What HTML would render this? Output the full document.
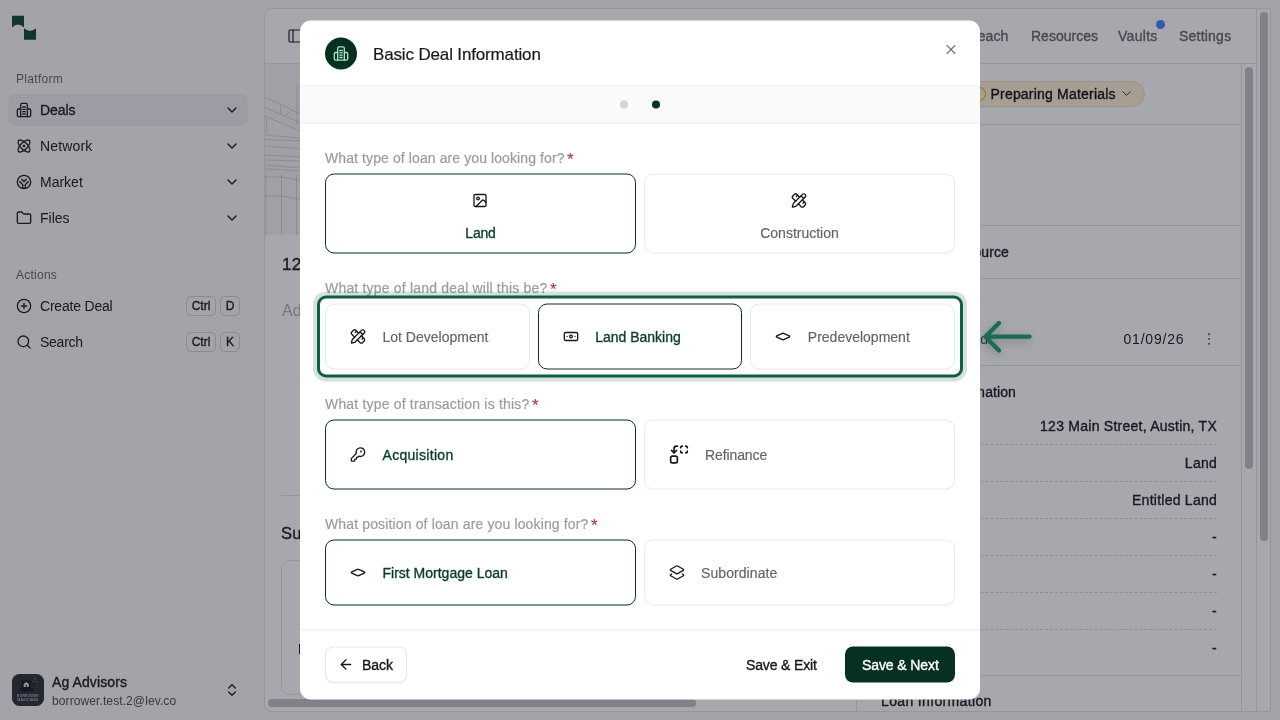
<!DOCTYPE html>
<html lang="en">
<head>
<meta charset="utf-8">
<title>Basic Deal Information</title>
<style>
*{box-sizing:border-box;margin:0;padding:0}
html,body{width:1280px;height:720px;overflow:hidden}
body{font-family:"Liberation Sans",sans-serif;font-size:14px;color:#18181b;background:#fafafa;position:relative}
.abs{position:absolute}
.t{position:absolute;white-space:nowrap;line-height:20px}
.m{-webkit-text-stroke:0.35px currentColor}
svg{display:block}
.ic{position:absolute;fill:none;stroke:currentColor;stroke-width:2;stroke-linecap:round;stroke-linejoin:round}

/* ---------- app behind ---------- */
#app{opacity:.9999;position:absolute;left:0;top:0;width:1280px;height:720px;background:#f9f8f7;color:#26262c}
#panel{position:absolute;left:264px;top:8px;width:1007px;height:704px;background:#fff;border:1px solid #e4e4e7;border-radius:8px 0 0 8px;overflow:hidden}
.hl{position:absolute;background:#e4e4e7}
.kbd{position:absolute;height:20px;border:1px solid #d4d4d8;border-radius:5px;font-size:12px;line-height:18px;text-align:center;color:#26262c}
.dash{position:absolute;height:0;border-top:1px dashed #d8d8dc}

#overlay{position:absolute;left:0;top:0;width:1280px;height:720px;background:rgba(4,6,20,.35)}

/* ---------- modal ---------- */
#modal{opacity:.9999;position:absolute;left:50%;top:50%;transform:translate(-50%,-50%);width:680px;height:679px;background:#fff;border-radius:11px;overflow:hidden;color:#18181b}
.card{position:absolute;border:1px solid #e8e8e8;border-radius:9px;background:#fff}
.card.sel{border-color:#0b2a24}
.lbl{color:#9c9c9c;-webkit-text-stroke:.2px #9c9c9c}
.req{color:#a51d1d}
.sel .t, .g{color:#0c3d2b}
.u{color:#636363;-webkit-text-stroke:.15px #636363}
</style>
</head>
<body>

<div id="app">
  <!-- sidebar -->
  <svg class="abs" style="left:12px;top:15px" width="24" height="25" viewBox="0 0 24 25"><path d="M0 .8H12V12.6Q6 6.6 0 12.6Z" fill="#1c4f3a"/><path d="M12 13.2Q18 18.6 24 13.2V24.8H12Z" fill="#1c4f3a"/></svg>
  <div class="t" style="left:16px;top:69px;font-size:12px;color:#6b6b74;letter-spacing:.3px">Platform</div>
  <div class="abs" style="left:8px;top:94px;width:240px;height:32px;border-radius:8px;background:#efeff2"></div>

  <svg class="ic" style="left:16px;top:102px" width="16" height="16" viewBox="0 0 24 24"><path d="M7 22V4a2 2 0 0 1 2-2h6a2 2 0 0 1 2 2v18Z"/><path d="M7 10.5H4a2 2 0 0 0-2 2V20a2 2 0 0 0 2 2h3"/><path d="M17 10.5h3a2 2 0 0 1 2 2V20a2 2 0 0 1-2 2h-3"/><path d="M10.2 7.5h3.6"/><path d="M10.2 11h3.6"/><path d="M10.2 14.5h3.6"/><path d="M10.2 18h3.6"/></svg>
  <div class="t m" style="left:40px;top:100px;letter-spacing:-.1px">Deals</div><svg class="ic" style="left:224px;top:102px" width="16" height="16" viewBox="0 0 24 24"><path d="m6 9 6 6 6-6"/></svg>
  <svg class="ic" style="left:16px;top:138px" width="16" height="16" viewBox="0 0 24 24"><circle cx="12" cy="12" r="1"/><path d="M20.2 20.2c2.04-2.03.02-7.36-4.5-11.9-4.54-4.52-9.87-6.54-11.9-4.5-2.04 2.03-.02 7.36 4.5 11.9 4.54 4.52 9.87 6.54 11.9 4.5Z"/><path d="M15.7 15.7c4.52-4.54 6.54-9.87 4.5-11.9-2.03-2.04-7.36-.02-11.9 4.5-4.52 4.54-6.54 9.87-4.5 11.9 2.03 2.04 7.36.02 11.9-4.5Z"/></svg>
  <div class="t" style="left:40px;top:136px;letter-spacing:.15px">Network</div><svg class="ic" style="left:224px;top:138px" width="16" height="16" viewBox="0 0 24 24"><path d="m6 9 6 6 6-6"/></svg>
  <svg class="ic" style="left:16px;top:174px" width="16" height="16" viewBox="0 0 24 24"><circle cx="12" cy="12" r="10"/><path d="M10.3 21.6v-5.2L5.6 11.2"/><path d="M13.7 21.6v-5.2l4.7-5.2"/><path d="M8.6 7.8 12 11.6l3.4-3.8"/></svg>
  <div class="t" style="left:40px;top:172px">Market</div><svg class="ic" style="left:224px;top:174px" width="16" height="16" viewBox="0 0 24 24"><path d="m6 9 6 6 6-6"/></svg>
  <svg class="ic" style="left:16px;top:210px" width="16" height="16" viewBox="0 0 24 24"><path d="M20 20a2 2 0 0 0 2-2V8a2 2 0 0 0-2-2h-7.9a2 2 0 0 1-1.69-.9L9.6 3.9A2 2 0 0 0 7.93 3H4a2 2 0 0 0-2 2v13a2 2 0 0 0 2 2Z"/></svg>
  <div class="t" style="left:40px;top:208px">Files</div><svg class="ic" style="left:224px;top:210px" width="16" height="16" viewBox="0 0 24 24"><path d="m6 9 6 6 6-6"/></svg>
  <div class="t" style="left:16px;top:265px;font-size:12px;color:#6b6b74;letter-spacing:.25px">Actions</div>
  <svg class="ic" style="left:16px;top:298px" width="16" height="16" viewBox="0 0 24 24"><circle cx="12" cy="12" r="10"/><path d="M8 12h8"/><path d="M12 8v8"/></svg>
  <div class="t" style="left:40px;top:296px;letter-spacing:-.2px">Create Deal</div>
  <div class="kbd m" style="left:186px;top:296px;width:30px">Ctrl</div><div class="kbd m" style="left:220px;top:296px;width:20px">D</div>
  <svg class="ic" style="left:16px;top:334px" width="16" height="16" viewBox="0 0 24 24"><circle cx="11" cy="11" r="8"/><path d="m21 21-4.3-4.3"/></svg>
  <div class="t" style="left:40px;top:332px;letter-spacing:-.25px">Search</div>
  <div class="kbd m" style="left:186px;top:332px;width:30px">Ctrl</div><div class="kbd m" style="left:220px;top:332px;width:20px">K</div>
  <!-- user -->
  <div class="abs" style="left:12px;top:674px;width:32px;height:32px;border-radius:7.5px;background:#363a42"></div>
  <svg class="abs" style="left:12px;top:674px" width="32" height="32" viewBox="0 0 32 32"><path d="M9.6 6.4h9.4v8.2H9.6z" fill="#20232c"/><ellipse cx="14.4" cy="15.6" rx="7.6" ry="1.9" fill="#20232c"/><path d="M14.3 8l2.6 2.1v3h-5.2v-3z" fill="#e6dccb"/><path d="M13.6 11h1.5v1.6h-1.5z" fill="#363a42"/><path d="M20.4 12.2l3.2-5" stroke="#2a2d36" stroke-width="1"/><path d="M23 4.2v1.4M22.3 4.9h1.4M21.3 7.1v1M20.8 7.6h1M24.4 7.3v1M23.9 7.8h1" stroke="#b9b2a6" stroke-width=".5"/><text x="16" y="23" font-size="3.3" font-weight="700" fill="#b4b4b4" text-anchor="middle" letter-spacing=".25" font-family="Liberation Sans, sans-serif">BORROWER</text><text x="16" y="26.7" font-size="3.3" font-weight="700" fill="#b4b4b4" text-anchor="middle" letter-spacing=".25" font-family="Liberation Sans, sans-serif">MAGICIANS</text></svg>
  <div class="t m" style="left:52px;top:672px;letter-spacing:.1px">Ag Advisors</div>
  <div class="t" style="left:52px;top:692px;font-size:12px;line-height:18px;color:#55555e;letter-spacing:.1px">borrower.test.2@lev.co</div>
  <svg class="ic" style="left:224px;top:682px" width="16" height="16" viewBox="0 0 24 24"><path d="m7 15 5 5 5-5"/><path d="m7 9 5-5 5 5"/></svg>
  <div id="panel"></div>
  <!-- top bar -->
  <svg class="ic" style="left:287px;top:28px;stroke-width:1.8" width="16" height="16" viewBox="0 0 24 24"><rect width="18" height="18" x="3" y="3" rx="2"/><path d="M9 3v18"/></svg>
  <div class="t m" style="left:950px;top:26px;color:#6e6e72;letter-spacing:.1px">Outreach</div>
  <div class="t m" style="left:1031px;top:26px;color:#6e6e72">Resources</div>
  <div class="t m" style="left:1118px;top:26px;color:#6e6e72;letter-spacing:.3px">Vaults</div>
  <div class="abs" style="left:1156px;top:19.5px;width:9px;height:9px;border-radius:50%;background:#4f86f7"></div>
  <div class="t m" style="left:1179px;top:26px;color:#6e6e72;letter-spacing:.22px">Settings</div>
  <div class="hl" style="left:265px;top:63px;width:991px;height:1px"></div>
  <div class="hl" style="left:1256px;top:9px;width:1px;height:702px"></div>
  <!-- outer scrollbar -->
  <div class="abs" style="left:1260px;top:12px;width:8px;height:529px;border-radius:4px;background:#c3c3c8"></div>
  <!-- hero sketch -->
  <div class="abs" style="left:265px;top:64px;width:592px;height:171px;background:#f4f4f6;overflow:hidden">
   <svg width="60" height="171" viewBox="0 0 60 171" style="position:absolute;left:0;top:0" fill="none" stroke="#5f5f6a" stroke-opacity=".3" stroke-width=".7"><path d="M32.0 21.0L32.0 61.0M0.0 33.0L35.0 49.7M0.0 43.5L35.0 58.5M0.0 52.0L35.0 67.0M15.7 41.0L15.7 50.0M19.5 52.0L28.0 46.0M1.5 54.7L1.5 68.5M0.0 71.0L35.0 74.0M0.0 75.5L35.0 77.0M0.0 82.0L35.0 84.7M0.0 91.0L35.0 93.0M0.0 96.0L35.0 97.0M0.0 101.0L35.0 104.0M0.0 104.7L35.0 107.0M16.5 109.7L16.5 171.0M31.5 111.0L31.5 171.0M1.0 111.0L1.0 171.0M0.0 113.0L16.5 113.0M16.5 113.0L31.5 115.5M0.0 132.0L16.5 132.0M16.5 132.0L31.5 134.7M31.5 115.5L35.0 116.0M31.5 134.7L35.0 135.5"/></svg>
  </div>
  <div class="t m" style="left:282px;top:251.5px;font-size:17px;line-height:26px;letter-spacing:.3px">123 Main Street</div>
  <div class="t" style="left:282px;top:299px;font-size:16px;line-height:24px;color:#b2b2b8">Add a description</div>
  <div class="hl" style="left:281px;top:495px;width:560px;height:1px"></div>
  <div class="t m" style="left:281px;top:519.6px;font-size:16.5px;line-height:26px;letter-spacing:.2px">Summary</div>
  <div class="abs" style="left:281px;top:560px;width:560px;height:135px;border:1px solid #e4e4e7;border-radius:9px"></div>
  <div class="abs" style="left:299px;top:644px;width:1.5px;height:10px;background:#26262c"></div>
  <!-- horizontal scrollbar -->
  <div class="abs" style="left:268px;top:699px;width:428px;height:8px;border-radius:4px;background:#c3c3c8"></div>
  <!-- right column -->
  <div class="hl" style="left:856px;top:64px;width:1px;height:647px"></div>
  <div class="hl" style="left:1241px;top:64px;width:1px;height:647px"></div>
  <div class="abs" style="left:1245px;top:67px;width:8px;height:402px;border-radius:4px;background:#c3c3c8"></div>
  <div class="abs" style="left:962px;top:81px;width:183px;height:26px;border-radius:13px;background:#fff0d8;border:1px solid #e9dcc6"></div>
  <div class="abs" style="left:972px;top:87px;width:14px;height:14px;border-radius:50%;border:1.5px solid #e6a23c"></div>
  <div class="t m" style="left:990.5px;top:84px;letter-spacing:.2px;color:#18181b">Preparing Materials</div>
  <svg class="ic" style="left:1119px;top:86px;stroke-width:1.6;color:#3a3a40" width="15" height="15" viewBox="0 0 24 24"><path d="m6 9 6 6 6-6"/></svg>
  <div class="hl" style="left:857px;top:124px;width:384px;height:1px"></div>
  <div class="hl" style="left:857px;top:225px;width:384px;height:1px"></div>
  <div class="t m" style="right:271px;top:242px;letter-spacing:.1px">Capital Source</div>
  <div class="hl" style="left:857px;top:278px;width:384px;height:1px"></div>
  <div class="t" style="right:292px;top:329px;color:#52525b">Uploaded</div>
  <div class="t" style="left:1123.5px;top:329px;letter-spacing:.8px">01/09/26</div>
  <svg class="abs" style="left:1207px;top:332px" width="4" height="14" viewBox="0 0 4 14" fill="#71717a"><circle cx="2" cy="2.2" r="1.1"/><circle cx="2" cy="7" r="1.1"/><circle cx="2" cy="11.8" r="1.1"/></svg>
  <div class="hl" style="left:857px;top:365px;width:384px;height:1px"></div>
  <div class="t m" style="right:264px;top:382px;letter-spacing:.1px">Property Information</div>
  <div class="t m" style="right:63px;top:416px;letter-spacing:.25px">123 Main Street, Austin, TX</div><div class="t m" style="right:63px;top:453px;letter-spacing:.25px">Land</div><div class="t m" style="right:63px;top:490px;letter-spacing:.25px">Entitled Land</div><div class="t m" style="right:63px;top:527px;letter-spacing:.25px">-</div><div class="t m" style="right:63px;top:564px;letter-spacing:.25px">-</div><div class="t m" style="right:63px;top:601px;letter-spacing:.25px">-</div><div class="t m" style="right:63px;top:638px;letter-spacing:.25px">-</div>
  <div class="dash" style="left:881px;top:444px;width:336px"></div><div class="dash" style="left:881px;top:481px;width:336px"></div><div class="dash" style="left:881px;top:518px;width:336px"></div><div class="dash" style="left:881px;top:555px;width:336px"></div><div class="dash" style="left:881px;top:592px;width:336px"></div><div class="dash" style="left:881px;top:629px;width:336px"></div>
  <div class="hl" style="left:857px;top:675px;width:384px;height:1px"></div>
  <div class="t m" style="left:881px;top:691px;letter-spacing:.35px">Loan Information</div>

</div>

<div id="overlay"></div>

<div id="modal">
 <div id="mi" style="position:absolute;left:-300px;top:-20px;width:1280px;height:720px">
  <!-- header -->
  <div class="abs" style="left:325px;top:37px;width:32px;height:32px;border-radius:50%;background:#06301f"></div>
  <svg class="ic" style="left:333px;top:45px;color:#a7e3c4" width="16" height="16" viewBox="0 0 24 24"><path d="M7 22V4a2 2 0 0 1 2-2h6a2 2 0 0 1 2 2v18Z"/><path d="M7 10.5H4a2 2 0 0 0-2 2V20a2 2 0 0 0 2 2h3"/><path d="M17 10.5h3a2 2 0 0 1 2 2V20a2 2 0 0 1-2 2h-3"/><path d="M10.2 7.5h3.6"/><path d="M10.2 11h3.6"/><path d="M10.2 14.5h3.6"/><path d="M10.2 18h3.6"/></svg>
  <div class="t" style="left:373px;top:41px;font-size:17px;line-height:26px;letter-spacing:-.15px;color:#1a1a1c;-webkit-text-stroke:.2px #1a1a1c">Basic Deal Information</div>
  <svg class="ic" style="left:943px;top:41px;color:#6f6f76;stroke-width:1.6" width="16" height="16" viewBox="0 0 24 24"><path d="M18 6 6 18"/><path d="m6 6 12 12"/></svg>
  <!-- stepper -->
  <div class="abs" style="left:300px;top:85px;width:680px;height:38px;background:#fafafa;border-top:1px solid #eeeeee;border-bottom:1px solid #eeeeee"></div>
  <div class="abs" style="left:620px;top:100px;width:8px;height:8px;border-radius:50%;background:#d4d4d4"></div>
  <div class="abs" style="left:652px;top:100px;width:8px;height:8px;border-radius:50%;background:#06301f"></div>

  <!-- Q1 -->
  <div class="t lbl" style="left:325px;top:147px;letter-spacing:0.1px">What type of loan are you looking for?<span class="req" style="margin-left:2.5px;font-size:17px;line-height:14px;position:relative;top:1.5px">*</span></div>
  <div class="card sel" style="left:325px;top:173px;width:311px;height:80px">
    <svg class="ic" style="left:146px;top:18px;color:#18181b" width="16" height="16" viewBox="0 0 24 24"><rect width="18" height="18" x="3" y="3" rx="2" ry="2"/><circle cx="9" cy="9" r="2"/><path d="m21 15-3.086-3.086a2 2 0 0 0-2.828 0L6 21"/></svg>
    <div class="t m" style="left:0;width:309px;text-align:center;top:48px;letter-spacing:-.2px">Land</div>
  </div>
  <div class="card" style="left:644px;top:173px;width:311px;height:80px">
    <svg class="ic" style="left:146px;top:18px;color:#18181b" width="16" height="16" viewBox="0 0 24 24"><path d="M13 7 8.7 2.7a2.41 2.41 0 0 0-3.4 0L2.7 5.3a2.41 2.41 0 0 0 0 3.4L7 13"/><path d="m8 6 2-2"/><path d="m18 16 2-2"/><path d="m17 11 4.3 4.3c.94.94.94 2.46 0 3.4l-2.6 2.6c-.94.94-2.46.94-3.4 0L11 17"/><path d="M21.174 6.812a1 1 0 0 0-3.986-3.987L3.842 16.174a2 2 0 0 0-.5.83l-1.321 4.352a.5.5 0 0 0 .623.622l4.353-1.32a2 2 0 0 0 .83-.497z"/><path d="m15 5 4 4"/></svg>
    <div class="t u" style="left:0;width:309px;text-align:center;top:48px">Construction</div>
  </div>

  <!-- Q2 (highlighted) -->
  <div class="t lbl" style="left:325px;top:277px;letter-spacing:0.19px">What type of land deal will this be?<span class="req" style="margin-left:2.5px;font-size:17px;line-height:14px;position:relative;top:1.5px">*</span></div>
  <div class="abs" style="left:317px;top:295px;width:646px;height:82px;border:3px solid #125c43;border-radius:9px;box-shadow:0 0 0 4px rgba(18,92,67,.18);background:#fff"></div>
  <div class="card" style="left:325px;top:303px;width:204.67px;height:66px">
    <svg class="ic" style="left:24px;top:24px;color:#18181b" width="16" height="16" viewBox="0 0 24 24"><path d="M13 7 8.7 2.7a2.41 2.41 0 0 0-3.4 0L2.7 5.3a2.41 2.41 0 0 0 0 3.4L7 13"/><path d="m8 6 2-2"/><path d="m18 16 2-2"/><path d="m17 11 4.3 4.3c.94.94.94 2.46 0 3.4l-2.6 2.6c-.94.94-2.46.94-3.4 0L11 17"/><path d="M21.174 6.812a1 1 0 0 0-3.986-3.987L3.842 16.174a2 2 0 0 0-.5.83l-1.321 4.352a.5.5 0 0 0 .623.622l4.353-1.32a2 2 0 0 0 .83-.497z"/><path d="m15 5 4 4"/></svg>
    <div class="t u" style="left:56.5px;top:22px">Lot Development</div>
  </div>
  <div class="card sel" style="left:537.67px;top:303px;width:204.67px;height:66px">
    <svg class="ic" style="left:24px;top:24px;color:#18181b" width="16" height="16" viewBox="0 0 24 24"><rect width="20" height="12" x="2" y="6" rx="2"/><circle cx="12" cy="12" r="2"/><path d="M6 12h.01M18 12h.01"/></svg>
    <div class="t m" style="left:56.5px;top:22px">Land Banking</div>
  </div>
  <div class="card" style="left:750.33px;top:303px;width:204.67px;height:66px">
    <svg class="ic" style="left:24px;top:24px;color:#18181b" width="16" height="16" viewBox="0 0 24 24"><path d="M12.83 7.18a2 2 0 0 0-1.66 0L2.6 11.08a1 1 0 0 0 0 1.83l8.58 3.91a2 2 0 0 0 1.66 0l8.58-3.9a1 1 0 0 0 0-1.83z"/></svg>
    <div class="t u" style="left:56.5px;top:22px">Predevelopment</div>
  </div>

  <!-- Q3 -->
  <div class="t lbl" style="left:325px;top:393px;letter-spacing:0.18px">What type of transaction is this?<span class="req" style="margin-left:2.5px;font-size:17px;line-height:14px;position:relative;top:1.5px">*</span></div>
  <div class="card sel" style="left:325px;top:419px;width:311px;height:70px">
    <svg class="ic" style="left:24px;top:26px;color:#18181b" width="16" height="16" viewBox="0 0 24 24"><path d="M2.586 17.414A2 2 0 0 0 2 18.828V21a1 1 0 0 0 1 1h3a1 1 0 0 0 1-1v-1a1 1 0 0 1 1-1h1a1 1 0 0 0 1-1v-1a1 1 0 0 1 1-1h.172a2 2 0 0 0 1.414-.586l.814-.814a6.5 6.5 0 1 0-4-4z"/><circle cx="16.5" cy="7.5" r=".5" fill="currentColor"/></svg>
    <div class="t m" style="left:56.5px;top:24px;letter-spacing:.3px">Acquisition</div>
  </div>
  <div class="card" style="left:644px;top:419px;width:311px;height:70px">
    <svg class="ic" style="left:24.2px;top:23.6px;color:#18181b" width="20" height="20" viewBox="0 0 24 24"><path d="M14 4a2 2 0 0 1 2-2"/><path d="M16 10a2 2 0 0 1-2-2"/><path d="M20 2a2 2 0 0 1 2 2"/><path d="M22 8a2 2 0 0 1-2 2"/><path d="m3 7 3 3 3-3"/><path d="M6 10V5a3 3 0 0 1 3-3h1"/><rect x="2" y="14" width="8" height="8" rx="2"/></svg>
    <div class="t u" style="left:60px;top:24px;letter-spacing:-.1px">Refinance</div>
  </div>

  <!-- Q4 -->
  <div class="t lbl" style="left:325px;top:513px;letter-spacing:0.14px">What position of loan are you looking for?<span class="req" style="margin-left:2.5px;font-size:17px;line-height:14px;position:relative;top:1.5px">*</span></div>
  <div class="card sel" style="left:325px;top:539px;width:311px;height:66px">
    <svg class="ic" style="left:24px;top:24px;color:#18181b" width="16" height="16" viewBox="0 0 24 24"><path d="M12.83 7.18a2 2 0 0 0-1.66 0L2.6 11.08a1 1 0 0 0 0 1.83l8.58 3.91a2 2 0 0 0 1.66 0l8.58-3.9a1 1 0 0 0 0-1.83z"/></svg>
    <div class="t m" style="left:56.5px;top:22px">First Mortgage Loan</div>
  </div>
  <div class="card" style="left:644px;top:539px;width:311px;height:66px">
    <svg class="ic" style="left:24.3px;top:24px;color:#18181b" width="16" height="16" viewBox="0 0 24 24"><path d="M13 13.74a2 2 0 0 1-2 0L2.5 8.87a1 1 0 0 1 0-1.74L11 2.26a2 2 0 0 1 2 0l8.5 4.87a1 1 0 0 1 0 1.74z"/><path d="m20 14.285 1.5.845a1 1 0 0 1 0 1.74L13 21.74a2 2 0 0 1-2 0l-8.5-4.87a1 1 0 0 1 0-1.74l1.5-.845"/></svg>
    <div class="t u" style="left:56px;top:22px;letter-spacing:.08px">Subordinate</div>
  </div>

  <!-- footer -->
  <div class="abs" style="left:300px;top:629px;width:680px;height:1px;background:#eeeeee"></div>
  <div class="abs" style="left:325px;top:646px;width:81.5px;height:36px;border:1px solid #e6e6e6;border-radius:8px;box-shadow:0 1px 2px rgba(0,0,0,.06)"></div>
  <svg class="ic" style="left:338px;top:656px;color:#18181b" width="16" height="16" viewBox="0 0 24 24"><path d="m12 19-7-7 7-7"/><path d="M19 12H5"/></svg>
  <div class="t m" style="left:362px;top:653.5px">Back</div>
  <div class="t m" style="left:746px;top:653.5px;letter-spacing:-.15px">Save &amp; Exit</div>
  <div class="abs" style="left:845.4px;top:646px;width:109.8px;height:36px;border-radius:8px;background:#06301f"></div>
  <div class="t m" style="left:862px;top:653.5px;color:#fff;letter-spacing:-.1px">Save &amp; Next</div>
 </div>
</div>
<svg class="abs" style="left:970px;top:306px;overflow:visible;filter:drop-shadow(0 3px 4px rgba(0,0,0,.25))" width="80" height="62" viewBox="970 306 80 62" fill="none" stroke="#1a6b4f" stroke-width="4.2" stroke-linecap="round" stroke-linejoin="round"><path d="M1029.6 336.7H985.5"/><path d="M999 323 985.4 336.7 999 350.4"/></svg>

</body>
</html>
